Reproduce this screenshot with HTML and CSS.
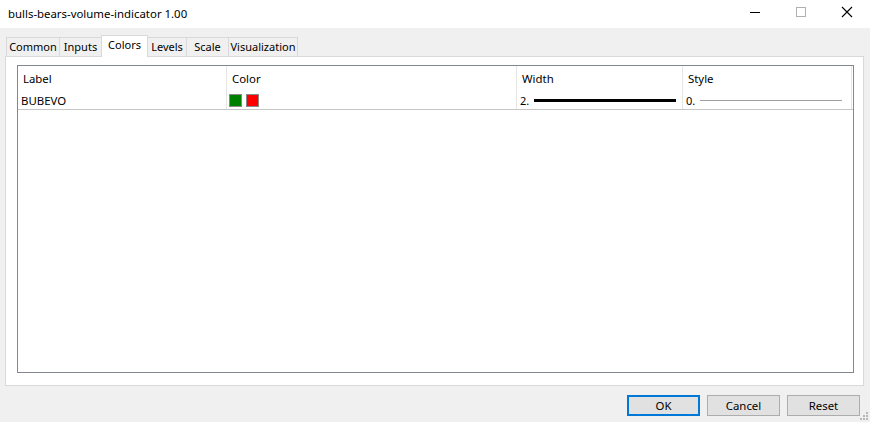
FILE: index.html
```
<!DOCTYPE html>
<html>
<head>
<meta charset="utf-8">
<link rel="stylesheet" href="styles.css">
</head>
<body>
<div class="win">
  <div class="titlebar">
    <div class="title">bulls-bears-volume-indicator 1.00</div>
    <div class="controls">
      <span class="ctl"><svg width="12" height="12" viewBox="0 0 12 12"><path d="M1 6.5H11" stroke="#000" stroke-width="1"/></svg></span>
      <span class="ctl"><svg width="12" height="12" viewBox="0 0 12 12"><rect x="1.5" y="1.5" width="9" height="9" fill="none" stroke="#b0b0b0" stroke-width="1"/></svg></span>
      <span class="ctl"><svg width="12" height="12" viewBox="0 0 12 12"><path d="M1 1L11 11M11 1L1 11" stroke="#000" stroke-width="1.1"/></svg></span>
    </div>
  </div>
  <div class="tabs">
    <div class="tab w-common">Common</div>
    <div class="tab w-inputs">Inputs</div>
    <div class="tab sel w-colors">Colors</div>
    <div class="tab w-levels">Levels</div>
    <div class="tab w-scale">Scale</div>
    <div class="tab w-vis">Visualization</div>
  </div>
  <div class="panel">
    <div class="list">
      <div class="grid hdr">
        <div class="cell c1">Label</div>
        <div class="cell c2">Color</div>
        <div class="cell c3">Width</div>
        <div class="cell c4">Style</div>
        <div class="cell c5"></div>
      </div>
      <div class="grid row">
        <div class="cell c1">BUBEVO</div>
        <div class="cell c2"><span class="sw green"></span><span class="sw red"></span></div>
        <div class="cell c3"><span class="num">2.</span><span class="thick"></span></div>
        <div class="cell c4"><span class="num">0.</span><span class="thin"></span></div>
        <div class="cell c5"></div>
      </div>
    </div>
  </div>
  <div class="buttons">
    <div class="btn def">OK</div>
    <div class="btn">Cancel</div>
    <div class="btn">Reset</div>
  </div>
  <svg class="grip" width="10" height="10" viewBox="0 0 10 10">
    <rect x="7" y="1" width="2" height="2" fill="#b8b8b8"/>
    <rect x="4" y="4" width="2" height="2" fill="#b8b8b8"/>
    <rect x="7" y="4" width="2" height="2" fill="#b8b8b8"/>
    <rect x="1" y="7" width="2" height="2" fill="#b8b8b8"/>
    <rect x="4" y="7" width="2" height="2" fill="#b8b8b8"/>
    <rect x="7" y="7" width="2" height="2" fill="#b8b8b8"/>
  </svg>
</div>
</body>
</html>
```
FILE: styles.css
```
* { box-sizing: border-box; }
html, body { margin: 0; padding: 0; }
body {
  width: 870px;
  height: 422px;
  overflow: hidden;
  background: #f0f0f0;
  font-family: "Noto Sans", "Open Sans", sans-serif;
  font-size: 11.4px;
  color: #000;
}
.win { position: relative; width: 870px; height: 422px; }
.titlebar {
  height: 28px;
  background: #fff;
  display: flex;
  align-items: center;
  justify-content: space-between;
}
.title { padding-left: 8px; font-size: 11.4px; padding-bottom: 2px; }
.controls { display: flex; height: 28px; }
.ctl {
  width: 46px;
  display: flex;
  align-items: center;
  justify-content: center;
  padding-bottom: 4px;
}
.tabs {
  display: flex;
  padding-left: 6px;
  margin-top: 7px;
  height: 21px;
  align-items: flex-end;
  position: relative;
  z-index: 2;
}
.tab {
  height: 19px;
  border: 1px solid #d9d9d9;
  border-bottom: none;
  margin-right: -1px;
  background: #f0f0f0;
  display: flex;
  align-items: center;
  justify-content: center;
  font-size: 11px;
  line-height: 1;
  padding-bottom: 1px;
}
.tab.sel {
  height: 22px;
  background: #fff;
  margin-bottom: -1px;
  padding-bottom: 4px;
  position: relative;
  z-index: 3;
}
.w-common { width: 54px; }
.w-inputs { width: 43px; }
.w-colors { width: 47px; }
.w-levels { width: 40px; }
.w-scale { width: 43px; }
.w-vis { width: 70px; }
.panel {
  margin: 0 6px 0 5px;
  height: 330px;
  border: 1px solid #d9d9d9;
  background: #fff;
  padding: 8px 9px 12px 11px;
  position: relative;
  z-index: 1;
}
.list {
  height: 100%;
  border: 1px solid #828790;
  background: #fff;
}
.grid {
  display: grid;
  grid-template-columns: 209px 290px 166px 169px 1fr;
}
.hdr { height: 24px; }
.hdr .cell {
  border-right: 1px solid #e5e5e5;
  padding-left: 5px;
  display: flex;
  align-items: center;
  padding-top: 0;
}
.hdr .c5 { border-right: none; }
.row {
  height: 20px;
  border-bottom: 1px solid #c6c6c6;
}
.row .cell {
  border-right: 1px solid #e5e5e5;
  padding-left: 3px;
  display: flex;
  align-items: center;
  padding-top: 1px;
}
.row .c5 { border-right: none; }
.row .c2 { padding-left: 2px; gap: 4px; }
.sw {
  width: 13px;
  height: 13px;
  border: 1px solid #8a8a8a;
  display: inline-block;
}
.green { background: #008000; }
.red { background: #ff0000; }
.num { width: 14px; display: inline-block; font-size: 11px; }
.thick { width: 142px; height: 3px; background: #000; }
.thin { width: 142px; height: 1px; background: #a0a0a0; }
.buttons {
  display: flex;
  justify-content: flex-end;
  gap: 7px;
  padding-right: 10px;
  margin-top: 9px;
}
.btn {
  width: 73px;
  height: 21px;
  border: 1px solid #adadad;
  background: #e1e1e1;
  display: flex;
  align-items: center;
  justify-content: center;
  font-size: 11.4px;
  padding-bottom: 1px;
}
.btn.def { border: 2px solid #0078d7; }
.grip { position: absolute; right: 1px; bottom: 1px; }
```
